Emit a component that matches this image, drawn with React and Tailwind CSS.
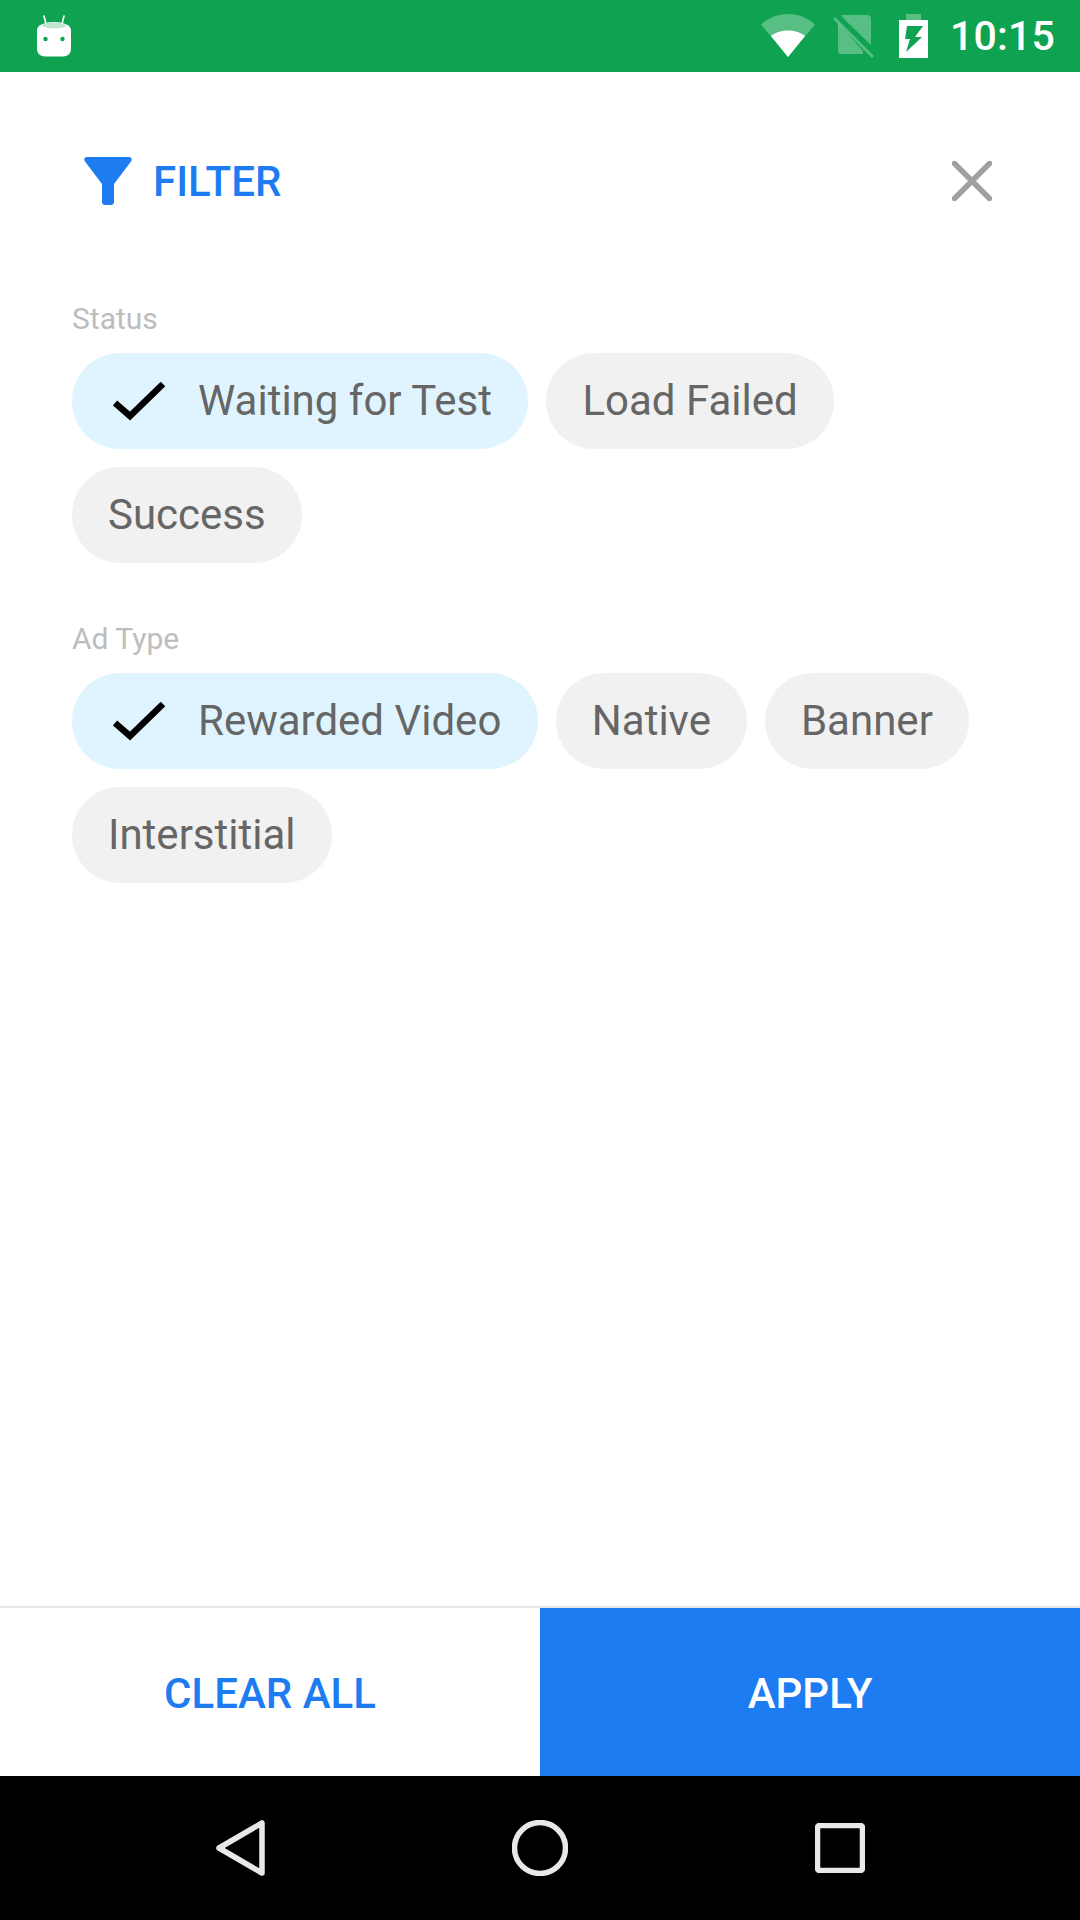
const statusChips = [
  { label: "Waiting for Test", selected: true },
  { label: "Load Failed" },
  { label: "Success" },
];

const adChips = [
  { label: "Rewarded Video", selected: true },
  { label: "Native" },
  { label: "Banner" },
  { label: "Interstitial" },
];

function Chip({ label, selected }) {
  if (selected) {
    return (
      <div className="flex h-[96px] items-center rounded-full bg-[#dff4fe] pb-[2px] pl-[41px] pr-[36.5px] text-[#666666]">
        <svg className="mr-[33px] mt-[2px] h-[40px] w-[52px]" viewBox="0 0 52 40" fill="none">
          <path d="M2 22L17 35L50 3" stroke="#000" strokeWidth="6.5" />
        </svg>
        {label}
      </div>
    );
  }
  return (
    <div className="flex h-[96px] items-center rounded-full bg-[#f1f1f1] px-[36px] pb-[2px] text-[#666666]">
      {label}
    </div>
  );
}

function Section({ title, chips }) {
  return (
    <div>
      <div className="h-[34px] text-[30px] leading-[32px] text-[#bdbdbd]">{title}</div>
      <div className="mt-[16px] flex flex-wrap gap-[18px] text-[42px]">
        {chips.map((chip) => (
          <Chip key={chip.label} label={chip.label} selected={chip.selected} />
        ))}
      </div>
    </div>
  );
}

function StatusBar() {
  return (
    <div className="flex h-[72px] shrink-0 items-center bg-[#0fa250] text-white">
      <svg className="ml-[37px] h-[42px] w-[34px]" viewBox="0 0 34 42">
        <path d="M7 1L9 9M27 1L25 9" stroke="#fff" strokeWidth="1.6" strokeLinecap="round" />
        <path d="M0 15C0 10 8 7 17 7S34 10 34 15V33C34 39 31 41 26 41.500H8C3 41 0 39 0 33Z" fill="#fff" />
        <ellipse cx="17" cy="10.500" rx="12" ry="3" fill="#bfe6d2" />
        <circle cx="8.500" cy="24" r="2.200" fill="#0fa250" />
        <circle cx="25.500" cy="24" r="2.200" fill="#0fa250" />
      </svg>
      <svg className="ml-[690px] h-[44px] w-[54px]" viewBox="0 0 54 44">
        <path d="M0 10.500C7 4 17 0 27 0S47 4 54 10.500L27 43Z" fill="#fff" fillOpacity="0.3" />
        <path d="M10 22C15 18 21 16.500 27 16.500S39 18 44 22L27 43Z" fill="#fff" />
      </svg>
      <svg className="ml-[18px] h-[44px] w-[41px]" viewBox="0 0 41 44" fill="#fff" fillOpacity="0.3">
        <path d="M8 1H34C36.500 1 38 2.500 38 4.500V31L11 5Z" />
        <path d="M5 9L30 37V40H8C6 40 5 39 5 37Z" />
        <path d="M1 4L40 43" stroke="#fff" strokeOpacity="0.3" strokeWidth="3" />
      </svg>
      <svg className="ml-[25px] h-[44px] w-[29px]" viewBox="0 0 29 44">
        <path d="M7 0H22V6H7Z" fill="#fff" fillOpacity="0.3" />
        <path d="M0 6H29V44H0Z" fill="#fff" />
        <path d="M8 12H24L16 23H23L7 38L11 25H6Z" fill="#0fa250" />
      </svg>
      <span className="ml-[22px] text-[41px] font-medium leading-none tracking-[0.2px]">10:15</span>
    </div>
  );
}

function NavBar() {
  return (
    <div className="flex h-[144px] shrink-0 bg-black">
      <div className="flex flex-1 items-center">
        <svg className="ml-[216px] h-[56px] w-[50px]" viewBox="0 0 50 56" fill="none">
          <path d="M46 3V53L3 28Z" stroke="#e8e8e8" strokeWidth="5.5" strokeLinejoin="round" />
        </svg>
        <svg className="ml-[246px] h-[56px] w-[56px]" viewBox="0 0 56 56" fill="none">
          <circle cx="28" cy="28" r="25.500" stroke="#e8e8e8" strokeWidth="5.500" />
        </svg>
        <svg className="ml-[247px] h-[50px] w-[50px]" viewBox="0 0 50 50" fill="none">
          <rect x="2.500" y="2.500" width="45" height="45" rx="2" stroke="#e8e8e8" strokeWidth="5.500" />
        </svg>
      </div>
    </div>
  );
}

export default function App() {
  return (
    <div className="flex h-[1920px] w-[1080px] flex-col bg-white font-['Roboto',sans-serif]">
      <StatusBar />
      <div className="flex-1">
        <div className="flex h-[84px] items-center pl-[84px] pr-[88px] pt-[67px] box-content">
          <svg className="h-[48px] w-[48px]" viewBox="0 0 48 48" fill="#1d7cf2">
            <path d="M3 0H45C47.500 0 48.500 2.500 47 4.500L30 27V45C30 47 28.500 48 27 48H21C19.500 48 18 47 18 45V27L1 4.500C-0.500 2.500 0.500 0 3 0Z" />
          </svg>
          <span className="ml-[21px] text-[42px] font-medium text-[#1d7cf2]">FILTER</span>
          <svg className="ml-auto h-[40px] w-[40px]" viewBox="0 0 40 40" fill="none">
            <path d="M2.500 2.500L37.500 37.500M37.500 2.500L2.500 37.500" stroke="#a0a0a0" strokeWidth="5.500" strokeLinecap="round" />
          </svg>
        </div>
        <div className="flex flex-col gap-[60px] px-[72px] pt-[80px]">
          <Section title="Status" chips={statusChips} />
          <Section title="Ad Type" chips={adChips} />
        </div>
      </div>
      <div className="flex h-[170px] shrink-0 border-t-2 border-[#e8e8e8] text-[42px] font-medium">
        <div className="flex flex-1 items-center justify-center pt-[2px] text-[#1d7cf2]">CLEAR ALL</div>
        <div className="flex flex-1 items-center justify-center bg-[#1d7cf2] pt-[2px] text-white">APPLY</div>
      </div>
      <NavBar />
    </div>
  );
}
